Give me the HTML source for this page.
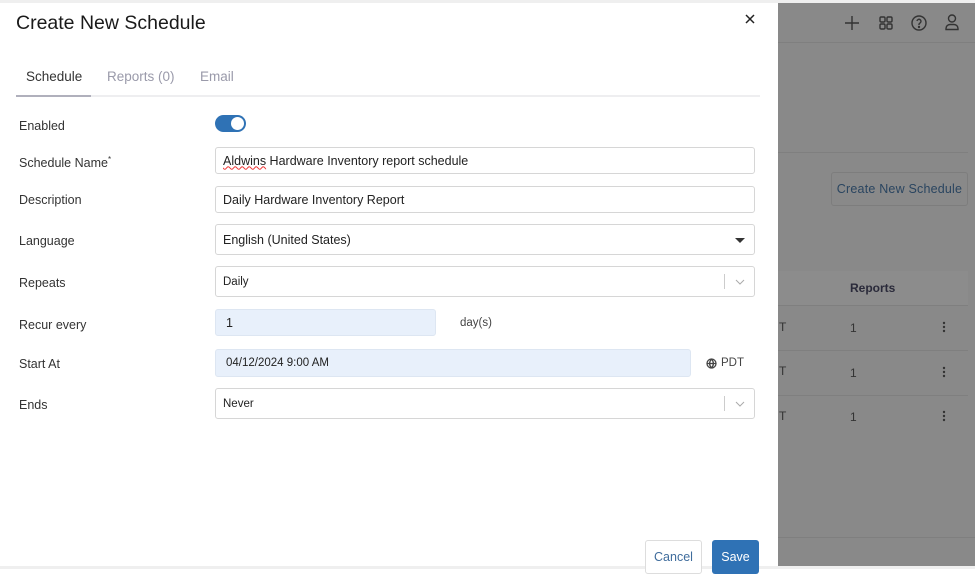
<!DOCTYPE html>
<html><head><style>
*{box-sizing:border-box;margin:0;padding:0}
body{width:975px;height:569px;overflow:hidden;font-family:"Liberation Sans",sans-serif;background:#fff;position:relative;color:#222}
.a{position:absolute}
.lbl{position:absolute;left:19px;font-size:12.5px;color:#333}
.inp{position:absolute;left:215px;width:540px;border:1px solid #d6d6d6;border-radius:3px;font-size:12.5px;color:#222;padding-left:7px;display:flex;align-items:center}
.sep{position:absolute;right:29px;top:7px;bottom:7px;border-left:1px solid #ccc}
.chev{position:absolute;right:9px;top:50%;margin-top:-5px}
.ov{background:#898989}
</style></head><body>
<div class="a" style="left:0;top:0;width:975px;height:3px;background:#efefef"></div>
<div class="a ov" style="left:778px;top:3px;width:197px;height:563px"></div>
<div class="a" style="left:778px;top:42px;width:197px;height:1px;background:#7f7f7f"></div>
<div class="a" style="left:778px;top:152px;width:190px;height:1px;background:#7f7f7f"></div>
<div class="a" style="left:831px;top:172px;width:137px;height:34px;border:1px solid #7d7d7d;border-radius:3px;color:#2a4560;font-size:12.5px;display:flex;align-items:center;justify-content:center;letter-spacing:0.2px">Create New Schedule</div>
<div class="a" style="left:778px;top:271px;width:190px;height:35px;background:#8c8c8c;border-bottom:1px solid #7f7f7f;font-size:12px;font-weight:bold;color:#2a2a3a;display:flex;align-items:center;padding-left:72px">Reports</div>
<div class="a" style="left:778px;top:350px;width:190px;height:1px;background:#7f7f7f"></div>
<div class="a" style="left:778px;top:395px;width:190px;height:1px;background:#7f7f7f"></div>
<div class="a" style="left:778px;top:537px;width:197px;height:1px;background:#7f7f7f"></div>
<div class="a" style="left:779px;top:320px;font-size:12px;color:#333">T</div>
<div class="a" style="left:779px;top:364px;font-size:12px;color:#333">T</div>
<div class="a" style="left:779px;top:409px;font-size:12px;color:#333">T</div>
<div class="a" style="left:850px;top:321px;font-size:12px;color:#333">1</div>
<div class="a" style="left:850px;top:366px;font-size:12px;color:#333">1</div>
<div class="a" style="left:850px;top:410px;font-size:12px;color:#333">1</div>
<svg class="a" style="left:942px;top:321px" width="4" height="110" fill="#333"><circle cx="2" cy="2" r="1.2"/><circle cx="2" cy="6" r="1.2"/><circle cx="2" cy="10" r="1.2"/><circle cx="2" cy="47" r="1.2"/><circle cx="2" cy="51" r="1.2"/><circle cx="2" cy="55" r="1.2"/><circle cx="2" cy="91" r="1.2"/><circle cx="2" cy="95" r="1.2"/><circle cx="2" cy="99" r="1.2"/></svg>
<svg class="a" style="left:840px;top:12px" width="125" height="22" fill="none" stroke="#333" stroke-width="1.4">
<path d="M12 4v14M5 11h14"/>
<rect x="40" y="5" width="5" height="5" rx="1.2"/><rect x="47" y="5" width="5" height="5" rx="1.2"/><rect x="40" y="12" width="5" height="5" rx="1.2"/><rect x="47" y="12" width="5" height="5" rx="1.2"/>
<circle cx="79" cy="11" r="7"/><path d="M77 9a2 2 0 1 1 3 2l-1 1v1"/><circle cx="79" cy="15" r=".5"/>
<circle cx="112" cy="6.5" r="3.5"/><path d="M106 17.5v-1a4 4 0 0 1 4-4h4a4 4 0 0 1 4 4v1z"/>
</svg>
<div class="a" style="left:0;top:566px;width:975px;height:3px;background:#efefef"></div>
<div class="a" style="left:16px;top:12px;font-size:19.5px;color:#1a1a1a">Create New Schedule</div>
<svg class="a" style="left:745px;top:14px" width="10" height="10" stroke="#222" stroke-width="1.5"><path d="M1 1l8 8M9 1l-8 8"/></svg>
<div class="a" style="left:26px;top:69px;font-size:13.5px;color:#333">Schedule</div>
<div class="a" style="left:107px;top:69px;font-size:13.5px;color:#9a9aaa">Reports (0)</div>
<div class="a" style="left:200px;top:69px;font-size:13.5px;color:#9a9aaa">Email</div>
<div class="a" style="left:16px;top:95px;width:744px;height:2px;background:#eeeef0"></div>
<div class="a" style="left:16px;top:95px;width:75px;height:2px;background:#b0b0bc"></div>
<div class="lbl" style="top:119px">Enabled</div>
<div class="a" style="left:215px;top:115px;width:31px;height:17px;border-radius:9px;background:#2f72b5"><div class="a" style="right:2px;top:2px;width:13px;height:13px;border-radius:50%;background:#fff"></div></div>
<div class="lbl" style="top:155px">Schedule Name<sup style="font-size:8px">*</sup></div>
<div class="inp" style="top:147px;height:27px"><span style="text-decoration:underline wavy #e33;text-decoration-thickness:1px">Aldwins</span>&nbsp;Hardware Inventory report schedule</div>
<div class="lbl" style="top:193px">Description</div>
<div class="inp" style="top:186px;height:27px">Daily Hardware Inventory Report</div>
<div class="lbl" style="top:234px">Language</div>
<div class="inp" style="top:224px;height:31px">English (United States)<svg class="chev" width="10" height="10"><path d="M0 3h10L5 8z" fill="#333"/></svg></div>
<div class="lbl" style="top:276px">Repeats</div>
<div class="inp" style="top:266px;height:31px;font-size:11.5px">Daily<div class="sep"></div><svg class="chev" width="10" height="10" fill="none" stroke="#aaa"><path d="M1 3l4 4 4-4"/></svg></div>
<div class="lbl" style="top:318px">Recur every</div>
<div class="inp" style="top:309px;height:27px;width:221px;background:#e8f0fb;border-color:#dde6f2;padding-left:10px">1</div>
<div class="a" style="left:460px;top:317px;font-size:11.5px;color:#444">day(s)</div>
<div class="lbl" style="top:357px">Start At</div>
<div class="inp" style="top:349px;height:28px;width:476px;background:#e8f0fb;border-color:#dde6f2;padding-left:10px;font-size:11.5px">04/12/2024 9:00 AM</div>
<svg class="a" style="left:706px;top:358px" width="11" height="11" fill="none" stroke="#444" stroke-width="1.3"><circle cx="5.5" cy="5.5" r="4.5"/><path d="M1 5.5h9M5.5 1c-2.5 3-2.5 6 0 9M5.5 1c2.5 3 2.5 6 0 9"/></svg>
<div class="a" style="left:721px;top:357px;font-size:11.5px;color:#444">PDT</div>
<div class="lbl" style="top:398px">Ends</div>
<div class="inp" style="top:388px;height:31px;font-size:11.5px">Never<div class="sep"></div><svg class="chev" width="10" height="10" fill="none" stroke="#aaa"><path d="M1 3l4 4 4-4"/></svg></div>
<div class="a" style="left:645px;top:540px;width:57px;height:34px;border:1px solid #ddd;border-radius:3px;background:#fff;color:#3f6c9c;font-size:12.5px;display:flex;align-items:center;justify-content:center">Cancel</div>
<div class="a" style="left:712px;top:540px;width:47px;height:34px;background:#2f72b5;border-radius:3px;color:#fff;font-size:12.5px;display:flex;align-items:center;justify-content:center">Save</div>
</body></html>
